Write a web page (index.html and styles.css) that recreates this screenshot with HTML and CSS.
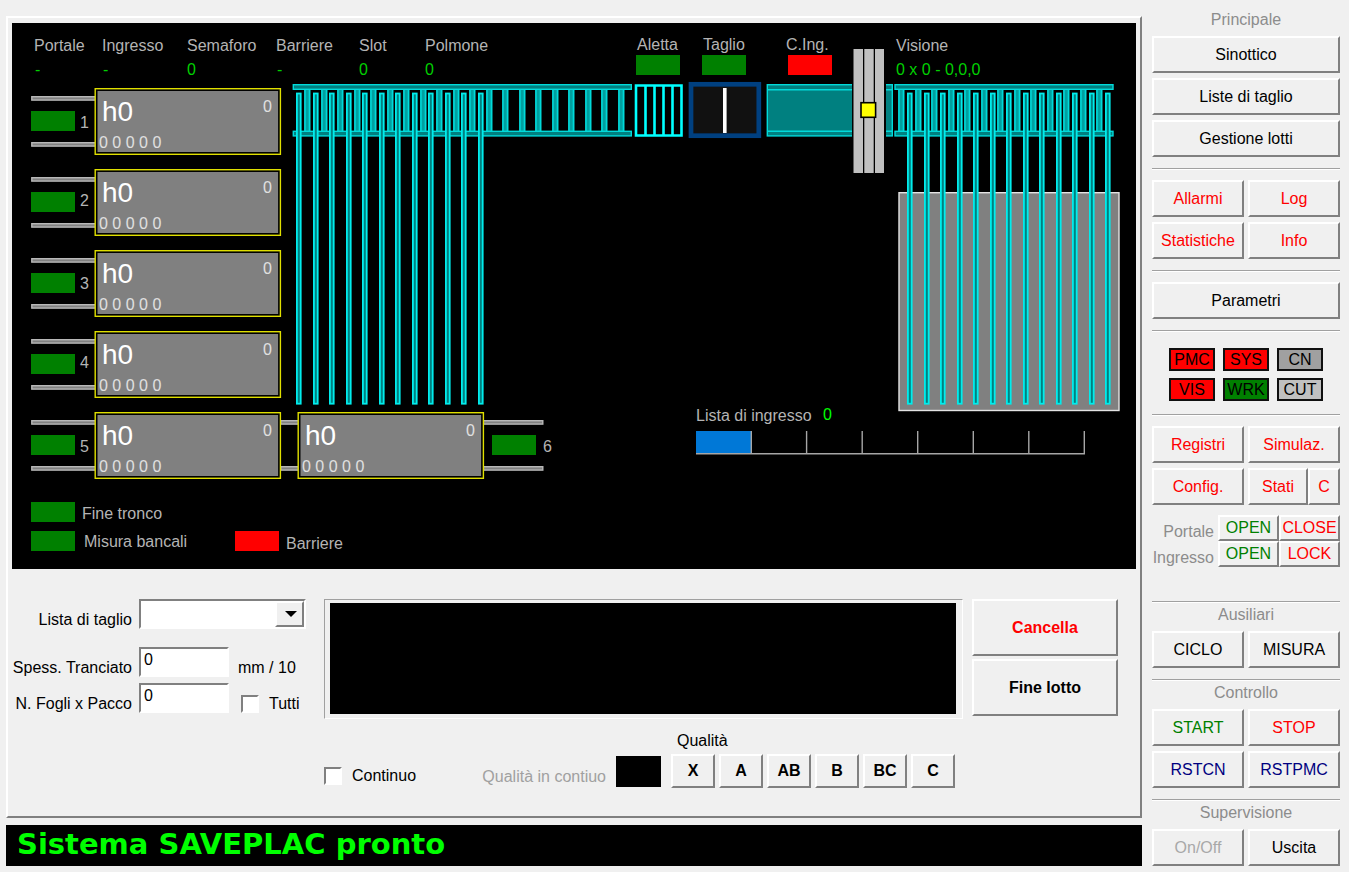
FILE: index.html
```html
<!DOCTYPE html>
<html lang="it">
<head>
<meta charset="utf-8">
<title>SAVEPLAC</title>
<link rel="stylesheet" href="styles.css">
</head>
<body>
<div class="app">
  <main class="main">
    <div class="panel">
      <svg class="synoptic" viewBox="12 23 1124 546" role="img" aria-label="Sinottico">
        <defs>
          <rect id="arm" x="0.9" y="93.5" width="3.8" height="310.2" class="pipe arm"/>
          <g id="roller">
            <rect x="0" y="88" width="6.6" height="45" fill="#00a0a0"/>
            <path d="M1 88V133M5.4 88V133" stroke="#00dada" stroke-width="1.4"/>
          </g>
          <rect id="led" width="44" height="20"/>
          <rect id="rail" x="31.8" y="0.7" width="64" height="3.4" class="rail"/>
          <g id="bay">
            <rect x="95.2" y="0.7" width="185.2" height="65.6" class="bay-edge"/>
            <rect x="97.5" y="3" width="180.6" height="61" class="bay-body"/>
            <text x="102" y="33" class="big">h0</text>
            <text x="263" y="24" class="light">0</text>
            <text x="99" y="60" class="light">0 0 0 0 0</text>
          </g>
          <g id="station">
            <use href="#rail" y="8"/>
            <use href="#rail" y="54"/>
            <use href="#led" x="31" y="23" class="ok"/>
            <use href="#bay"/>
          </g>
        </defs>
        <rect x="12" y="23" width="1124" height="546" fill="#000"/>

        <text x="34" y="51">Portale</text><text x="35" y="75" class="val">-</text>
        <text x="102" y="51">Ingresso</text><text x="103" y="75" class="val">-</text>
        <text x="187" y="51">Semaforo</text><text x="187" y="75" class="val">0</text>
        <text x="276" y="51">Barriere</text><text x="277" y="75" class="val">-</text>
        <text x="359" y="51">Slot</text><text x="359" y="75" class="val">0</text>
        <text x="425" y="51">Polmone</text><text x="425" y="75" class="val">0</text>
        <text x="637" y="50">Aletta</text><use href="#led" x="636" y="55" class="ok"/>
        <text x="703" y="50">Taglio</text><use href="#led" x="702" y="55" class="ok"/>
        <text x="786" y="50">C.Ing.</text><use href="#led" x="788" y="55" class="ko"/>
        <text x="896" y="51">Visione</text><text x="896" y="75" class="val">0 x 0 - 0,0,0</text>

        <use href="#rail" x="249" y="420"/><use href="#rail" x="249" y="466"/>
        <use href="#rail" x="447" y="420"/><use href="#rail" x="447" y="466"/>
        <use href="#station" y="88"/><text x="80" y="128">1</text>
        <use href="#station" y="169"/><text x="80" y="206">2</text>
        <use href="#station" y="250"/><text x="80" y="289">3</text>
        <use href="#station" y="331"/><text x="80" y="368">4</text>
        <use href="#station" y="412"/><text x="80" y="452">5</text>
        <use href="#bay" x="203" y="412"/>
        <use href="#led" x="492" y="435" class="ok"/><text x="543" y="452">6</text>

        <g>
          <use href="#roller" x="304"/><use href="#roller" x="321"/><use href="#roller" x="337"/><use href="#roller" x="354"/>
          <use href="#roller" x="370"/><use href="#roller" x="387"/><use href="#roller" x="403"/><use href="#roller" x="420"/>
          <use href="#roller" x="436"/><use href="#roller" x="453"/><use href="#roller" x="469"/><use href="#roller" x="486"/>
          <use href="#roller" x="502"/><use href="#roller" x="519"/><use href="#roller" x="535"/><use href="#roller" x="552"/>
          <use href="#roller" x="568"/><use href="#roller" x="585"/><use href="#roller" x="601"/><use href="#roller" x="618"/>
          <rect x="293.3" y="84.7" width="338" height="4.6" class="pipe"/>
          <rect x="293.3" y="131.3" width="338" height="4.6" class="pipe"/>
          <use href="#arm" x="296"/><use href="#arm" x="313"/><use href="#arm" x="329"/><use href="#arm" x="346"/>
          <use href="#arm" x="362"/><use href="#arm" x="379"/><use href="#arm" x="395"/><use href="#arm" x="412"/>
          <use href="#arm" x="428"/><use href="#arm" x="445"/><use href="#arm" x="461"/><use href="#arm" x="478"/>
        </g>

        <path d="M636 85.5H681.5V135.5H636ZM645.5 85V136M654.5 85V136M663.5 85V136M672.5 85V136" fill="none" stroke="#0ff" stroke-width="2.6"/>
        <rect x="691" y="84.3" width="67.8" height="51.4" fill="#111" stroke="#004080" stroke-width="4.7"/>
        <rect x="723" y="88" width="3.6" height="45" fill="#fff"/>

        <rect x="767.3" y="84.7" width="125" height="51.2" class="pipe"/>
        <path d="M767 89.7H892M767 131.3H892" stroke="#00dada" stroke-width="1.4"/>
        <rect x="852" y="49" width="34" height="124" fill="#000"/>
        <path d="M853.5 49h9.5v124h-9.5zM864.3 49h9.4v124h-9.4zM875 49h9v124h-9z" fill="#c0c0c0"/>
        <rect x="861" y="102.7" width="14.6" height="14.6" fill="#ff0" stroke="#000" stroke-width="1.6"/>

        <rect x="899" y="192.7" width="220" height="217.8" fill="#808080" stroke="#e4e4e4" stroke-width="1.4"/>
        <g>
          <use href="#roller" x="898"/><use href="#roller" x="915"/><use href="#roller" x="931"/><use href="#roller" x="948"/>
          <use href="#roller" x="964"/><use href="#roller" x="981"/><use href="#roller" x="997"/><use href="#roller" x="1014"/>
          <use href="#roller" x="1030"/><use href="#roller" x="1047"/><use href="#roller" x="1063"/><use href="#roller" x="1080"/>
          <use href="#roller" x="1096"/>
          <rect x="895" y="84.7" width="218" height="4.6" class="pipe"/>
          <rect x="895" y="131.3" width="218" height="4.6" class="pipe"/>
          <use href="#arm" x="907"/><use href="#arm" x="924"/><use href="#arm" x="940"/><use href="#arm" x="957"/>
          <use href="#arm" x="973"/><use href="#arm" x="990"/><use href="#arm" x="1006"/><use href="#arm" x="1023"/>
          <use href="#arm" x="1039"/><use href="#arm" x="1056"/><use href="#arm" x="1072"/><use href="#arm" x="1089"/>
          <use href="#arm" x="1105"/>
        </g>

        <text x="696" y="421">Lista di ingresso</text><text x="823" y="420" class="val bright">0</text>
        <rect x="696" y="431" width="55" height="23" fill="#0078d7"/>
        <path d="M696 453.8H1085M751.3 431V454M806.6 431V454M862.2 431V454M917.7 431V454M973.3 431V454M1028.8 431V454M1084.3 431V454" fill="none" stroke="#a6a6a6" stroke-width="1.4"/>

        <use href="#led" x="31" y="502" class="ok"/><text x="82" y="519">Fine tronco</text>
        <use href="#led" x="31" y="531" class="ok"/><text x="84" y="547">Misura bancali</text>
        <use href="#led" x="235" y="531" class="ko"/><text x="286" y="549">Barriere</text>
      </svg>

      <form class="controls">
        <div class="fields">
          <div class="field first">
            <label for="lista">Lista di taglio</label>
            <span class="combo"><select id="lista"><option></option></select></span>
          </div>
          <div class="field">
            <label for="spess">Spess. Tranciato</label>
            <input class="edit" id="spess" type="text" value="0">
            <span class="side">mm / 10</span>
          </div>
          <div class="field">
            <label for="fogli">N. Fogli x Pacco</label>
            <input class="edit" id="fogli" type="text" value="0">
            <label class="check all"><input type="checkbox">Tutti</label>
          </div>
        </div>
        <div class="frame"><div class="screen"></div></div>
        <div class="actions">
          <button type="button" class="btn red">Cancella</button>
          <button type="button" class="btn">Fine lotto</button>
        </div>
        <div class="quality">
          <label class="check cont"><input type="checkbox">Continuo</label>
          <span class="muted">Qualità in contiuo</span>
          <output class="swatch"></output>
          <div class="grades">
            <span class="grades-title">Qualità</span>
            <div class="grade-row">
              <button type="button" class="btn">X</button>
              <button type="button" class="btn">A</button>
              <button type="button" class="btn">AB</button>
              <button type="button" class="btn">B</button>
              <button type="button" class="btn">BC</button>
              <button type="button" class="btn">C</button>
            </div>
          </div>
        </div>
      </form>
    </div>
    <div class="status">Sistema SAVEPLAC pronto</div>
  </main>

  <nav class="sidebar">
    <div class="title">Principale</div>
    <div class="stack">
      <button class="btn">Sinottico</button>
      <button class="btn">Liste di taglio</button>
      <button class="btn">Gestione lotti</button>
    </div>
    <hr>
    <div class="pairs">
      <button class="btn red">Allarmi</button>
      <button class="btn red">Log</button>
      <button class="btn red">Statistiche</button>
      <button class="btn red">Info</button>
    </div>
    <hr>
    <div class="stack"><button class="btn">Parametri</button></div>
    <hr>
    <div class="lamps">
      <span class="lamp alarm">PMC</span><span class="lamp alarm">SYS</span><span class="lamp idle">CN</span>
      <span class="lamp alarm">VIS</span><span class="lamp run">WRK</span><span class="lamp off">CUT</span>
    </div>
    <hr>
    <div class="pairs">
      <button class="btn red">Registri</button>
      <button class="btn red">Simulaz.</button>
      <button class="btn red">Config.</button>
      <div class="split">
        <button class="btn red wide">Stati</button>
        <button class="btn red">C</button>
      </div>
    </div>
    <div class="gates">
      <span class="gate-name">Portale</span>
      <button class="btn green">OPEN</button><button class="btn red">CLOSE</button>
      <span class="gate-name">Ingresso</span>
      <button class="btn green">OPEN</button><button class="btn red">LOCK</button>
    </div>
    <hr class="flush">
    <div class="title">Ausiliari</div>
    <div class="pairs">
      <button class="btn">CICLO</button>
      <button class="btn">MISURA</button>
    </div>
    <hr class="flush">
    <div class="title">Controllo</div>
    <div class="pairs">
      <button class="btn green">START</button>
      <button class="btn red">STOP</button>
      <button class="btn navy">RSTCN</button>
      <button class="btn navy">RSTPMC</button>
    </div>
    <hr class="flush">
    <div class="title">Supervisione</div>
    <div class="pairs">
      <button class="btn" disabled>On/Off</button>
      <button class="btn">Uscita</button>
    </div>
  </nav>
</div>
</body>
</html>
```
FILE: styles.css
```css
* { box-sizing: border-box; }

body {
  margin: 0;
  background: #f0f0f0;
  color: #000;
  font: 16px/18px "Liberation Sans", Arial, sans-serif;
}

button, input, select { font: inherit; color: inherit; }

.app {
  display: flex;
  gap: 10px;
  padding: 0 9px 6px 6px;
}

.main {
  flex: 1;
  min-width: 0;
  padding-top: 16px;
}

.panel {
  border: 2px solid;
  border-color: #fff #808080 #808080 #fff;
  padding: 5px 4px 28px;
}

/* Synoptic */
.synoptic {
  display: block;
  width: 100%;
  height: auto;
}
.synoptic text { fill: #b4b4b4; font-size: 16px; white-space: pre; }
.synoptic .val { fill: #00d000; }
.synoptic .bright { fill: #00ff00; }
.synoptic .light { fill: #e0e0e0; }
.synoptic .big { fill: #fff; font-size: 28px; }
.pipe { fill: #008080; stroke: #00dada; stroke-width: 1.4; }
.arm { stroke: #00ecec; stroke-width: 1.8; }
.rail { fill: #808080; stroke: #b8b8b8; stroke-width: 1.4; }
.bay-edge { fill: #000; stroke: #e0e000; stroke-width: 1.4; }
.bay-body { fill: #808080; }
.ok { fill: #008000; }
.ko { fill: #ff0000; }

/* Buttons */
.btn {
  padding: 8px 0;
  border: 2px solid;
  border-color: #fff #808080 #808080 #fff;
  border-radius: 0;
  background: #f0f0f0;
  line-height: 17px;
  text-align: center;
  white-space: nowrap;
}
.btn:disabled { color: #a8a8a8; }
.red { color: #ff0000; }
.green { color: #008000; }
.navy { color: #000080; }

/* Lower controls */
.controls {
  display: grid;
  grid-template-columns: 294px 1fr 146px;
  column-gap: 9px;
  row-gap: 13px;
  padding: 30px 18px 0 0;
}
.field {
  display: flex;
  align-items: flex-end;
  margin-bottom: 6px;
  white-space: nowrap;
}
.field.first { margin-bottom: 18px; }
.field > label:first-child {
  width: 120px;
  margin-right: 7px;
  text-align: right;
}
.edit, .combo {
  height: 30px;
  border: 2px solid;
  border-color: #808080 #fff #fff #808080;
  background: #fff;
}
.edit { width: 90px; padding: 0 3px 4px; }
.combo { position: relative; flex: 1; }
.combo select {
  width: 100%;
  height: 100%;
  border: 0;
  padding: 0 28px 0 4px;
  background: #fff;
  appearance: none;
}
.combo::before {
  content: "";
  position: absolute;
  top: 0;
  right: 0;
  bottom: 0;
  width: 25px;
  border: 2px solid;
  border-color: #fff #808080 #808080 #fff;
  background: #f0f0f0;
  pointer-events: none;
}
.combo::after {
  content: "";
  position: absolute;
  top: 10px;
  right: 7px;
  border: solid transparent;
  border-width: 6px 6px 0;
  border-top-color: #000;
  pointer-events: none;
}
.side { margin-left: 9px; }
.all { margin-left: 12px; }
.check { display: flex; align-items: center; gap: 10px; }
.check input {
  width: 18px;
  height: 18px;
  margin: 0;
  border: 2px solid;
  border-color: #808080 #fff #fff #808080;
  background: #fff;
  appearance: none;
}
.frame {
  display: flex;
  margin-left: 9px;
  padding: 3px 6px 4px 5px;
  border: 1px solid;
  border-color: #a0a0a0 #fff #fff #a0a0a0;
}
.screen { flex: 1; background: #000; }
.actions {
  display: grid;
  gap: 3px;
  font-weight: bold;
  align-content: start;
}
.actions .btn { padding: 18px 0; }
.quality {
  grid-column: 2;
  display: flex;
  align-items: flex-end;
  gap: 10px;
  padding: 0 8px 0 9px;
}
.cont { margin-right: auto; margin-bottom: 3px; }
.muted { margin-bottom: 2px; color: #a0a0a0; }
.swatch { width: 45px; height: 31px; margin-bottom: 1px; background: #000; }
.grades-title { display: block; margin: 0 0 4px 6px; }
.grade-row { display: flex; gap: 4px; font-weight: bold; }
.grade-row .btn { width: 44px; padding: 7px 0; line-height: 16px; }

.status {
  margin-top: 7px;
  padding: 1px 11px 3px;
  background: #000;
  color: #00ff00;
  font: bold 29px/37px "DejaVu Sans", Verdana, sans-serif;
}

/* Sidebar */
.sidebar { width: 188px; padding-top: 8px; }
.title {
  margin-bottom: 4px;
  color: #8c8c8c;
  line-height: 24px;
  text-align: center;
}
.stack { display: grid; gap: 5px; }
.pairs { display: grid; grid-template-columns: 1fr 1fr; gap: 5px 4px; }
hr {
  margin: 11px 0 10px;
  border: 0;
  border-top: 1px solid #a0a0a0;
  border-bottom: 1px solid #fff;
}
hr.flush { margin-bottom: 0; }
.lamps {
  display: grid;
  grid-template-columns: repeat(3, 46px);
  justify-content: center;
  gap: 7px 8px;
  padding: 6px 0 2px;
}
.lamp {
  border: 2px solid #101010;
  line-height: 19px;
  text-align: center;
}
.alarm { background: #ff0000; }
.run { background: #008000; }
.idle { background: #a0a0a0; }
.off { background: #c0c0c0; }
.split { display: flex; }
.split .btn { flex: 1; }
.split .wide { flex: 2; }
.gates {
  display: grid;
  grid-template-columns: 62px 65px 1fr;
  align-items: center;
  padding: 10px 0 23px;
}
.gates .btn { padding: 3px 0; line-height: 16px; }
.gates .green { margin-left: 4px; }
.gate-name {
  padding-top: 8px;
  color: #8c8c8c;
  text-align: right;
}
```
